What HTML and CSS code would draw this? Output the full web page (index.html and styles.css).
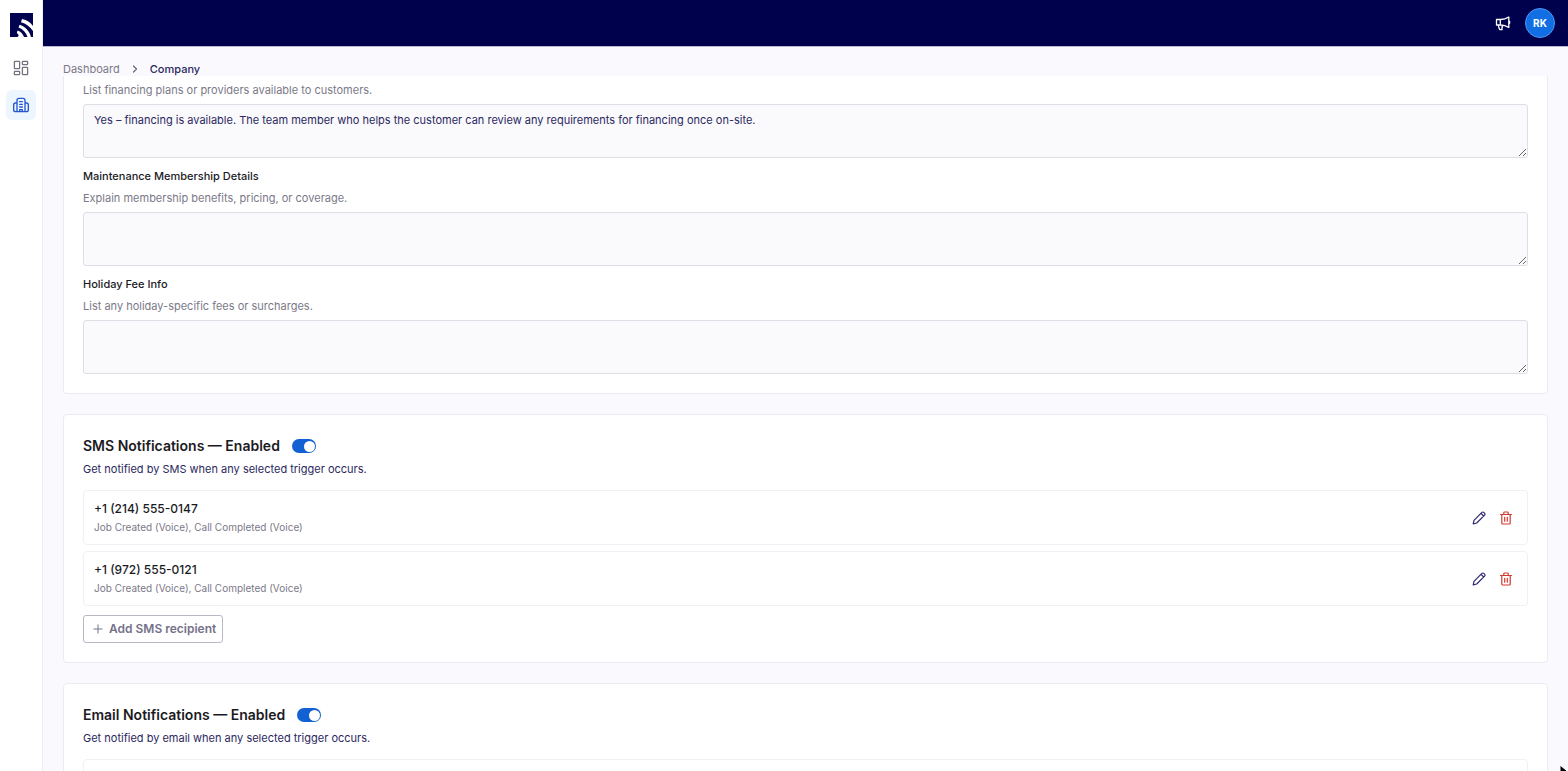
FILE: index.html
```html
<!DOCTYPE html>
<html lang="en">
<head>
<meta charset="utf-8">
<meta name="viewport" content="width=device-width, initial-scale=1">
<title>Company</title>
<link rel="stylesheet" href="styles.css">
</head>
<body>
<div class="app">
  <nav class="sidebar" aria-label="Main">
    <a class="logo" href="#" aria-label="Home">
      <svg width="23" height="24" viewBox="0 0 23 24" aria-hidden="true">
        <path fill="#03044f" d="M0 0h23v24H0z"/>
        <path fill="#fff" d="M12 6C17 7 20.500 9.500 23 13v5C20 13.500 16 10.500 11 9.200zM9.600 11.800C15 13.500 19.500 18 21 24h-3.500C16 19.500 13 16 8.500 14.500zM7.600 17.500c3.200 1.200 5.400 3.500 6.400 6.500H7.500c1-.6 1.300-1.600.8-2.600L6.800 20z"/>
      </svg>
    </a>
    <a class="nav-item" href="#" aria-label="Dashboard">
      <svg width="16" height="16" viewBox="0 0 16 16" fill="none" stroke="currentColor" stroke-width="1.3" aria-hidden="true">
        <rect x="1.400" y="1.400" width="5.200" height="7.200" rx=".6"/><rect x="9.400" y="1.400" width="5.200" height="3.200" rx=".6"/><rect x="1.400" y="11.400" width="5.200" height="3.200" rx=".6"/><rect x="9.400" y="7.400" width="5.200" height="7.200" rx=".6"/>
      </svg>
    </a>
    <a class="nav-item nav-item-active" href="#" aria-label="Company" aria-current="page">
      <svg width="16" height="16" viewBox="0 0 24 24" fill="none" stroke="currentColor" stroke-width="2" stroke-linecap="round" stroke-linejoin="round" aria-hidden="true">
        <path d="M6 22V5a3 3 0 0 1 3-3h6a3 3 0 0 1 3 3v17zM6 9H4a3 3 0 0 0-3 3v7a3 3 0 0 0 3 3h2M18 9h2a3 3 0 0 1 3 3v7a3 3 0 0 1-3 3h-2M10 7h4M10 11h4M10 15h4M10 22v-3h4v3"/>
      </svg>
    </a>
  </nav>
  <div class="page">
    <header class="topbar">
      <button class="icon-button announce" type="button" aria-label="Announcements">
        <svg width="16" height="16" viewBox="0 0 16 16" fill="none" stroke="currentColor" stroke-width="1.3" stroke-linejoin="round" stroke-linecap="round" aria-hidden="true">
          <path d="M1.500 4.500h4.200C9 4.500 11.500 3.500 13.800 2v10.500C11.500 11 9 10 5.700 10H1.500zM5.300 4.500V10M3.300 10c.2 1.700.7 3.200 1.500 4.600h2.400C6.600 13.700 6.700 12.700 7.500 12L6.400 10.200M14.600 6.300v2"/>
        </svg>
      </button>
      <button class="avatar" type="button">RK</button>
    </header>
    <nav class="breadcrumb" aria-label="Breadcrumb">
      <a class="crumb" href="#">Dashboard</a>
      <svg width="10" height="10" viewBox="0 0 10 10" fill="none" stroke="currentColor" stroke-width="1.2" stroke-linecap="round" stroke-linejoin="round" aria-hidden="true"><path d="M3.500 2l3 3-3 3"/></svg>
      <a class="crumb crumb-current" href="#" aria-current="page">Company</a>
    </nav>
    <main class="content">
      <section class="card card-continued">
        <div class="field">
          <p class="help" id="financing-help">List financing plans or providers available to customers.</p>
          <textarea class="textbox" aria-labelledby="financing-help">Yes – financing is available. The team member who helps the customer can review any requirements for financing once on-site.</textarea>
        </div>
        <div class="field">
          <label class="label" for="membership">Maintenance Membership Details</label>
          <p class="help" id="membership-help">Explain membership benefits, pricing, or coverage.</p>
          <textarea class="textbox" id="membership" aria-describedby="membership-help"></textarea>
        </div>
        <div class="field">
          <label class="label" for="holiday">Holiday Fee Info</label>
          <p class="help" id="holiday-help">List any holiday-specific fees or surcharges.</p>
          <textarea class="textbox" id="holiday" aria-describedby="holiday-help"></textarea>
        </div>
      </section>
      <section class="card">
        <div class="card-head">
          <label class="title" for="sms-switch">SMS Notifications — Enabled</label>
          <input class="switch" id="sms-switch" type="checkbox" role="switch" checked>
        </div>
        <p class="subtitle">Get notified by SMS when any selected trigger occurs.</p>
        <ul class="recipients">
          <li class="recipient">
            <div class="recipient-text">
              <span class="recipient-name">+1 (214) 555-0147</span>
              <span class="recipient-meta">Job Created (Voice), Call Completed (Voice)</span>
            </div>
            <button class="icon-button" type="button" aria-label="Edit"><svg class="icon"><use href="#icon-pencil"/></svg></button>
            <button class="icon-button danger" type="button" aria-label="Delete"><svg class="icon"><use href="#icon-trash"/></svg></button>
          </li>
          <li class="recipient">
            <div class="recipient-text">
              <span class="recipient-name">+1 (972) 555-0121</span>
              <span class="recipient-meta">Job Created (Voice), Call Completed (Voice)</span>
            </div>
            <button class="icon-button" type="button" aria-label="Edit"><svg class="icon"><use href="#icon-pencil"/></svg></button>
            <button class="icon-button danger" type="button" aria-label="Delete"><svg class="icon"><use href="#icon-trash"/></svg></button>
          </li>
        </ul>
        <button class="add-button" type="button">
          <svg width="10" height="10" viewBox="0 0 10 10" fill="none" stroke="currentColor" aria-hidden="true"><path d="M5 .5v9M.5 5h9"/></svg>
          Add SMS recipient
        </button>
      </section>
      <section class="card">
        <div class="card-head">
          <label class="title" for="email-switch">Email Notifications — Enabled</label>
          <input class="switch" id="email-switch" type="checkbox" role="switch" checked>
        </div>
        <p class="subtitle">Get notified by email when any selected trigger occurs.</p>
        <ul class="recipients">
          <li class="recipient"></li>
        </ul>
      </section>
    </main>
  </div>
  <svg class="cursor" width="14" height="20" viewBox="0 0 14 20" aria-hidden="true"><path d="M1 1v15l4-4 3 7 3-1-3-7h5z" stroke="#fff"/></svg>
</div>
<svg class="sprite" aria-hidden="true">
  <symbol id="icon-pencil" viewBox="0 0 14 14" fill="none" stroke="currentColor" stroke-width="1.200" stroke-linejoin="round" stroke-linecap="round">
    <path d="M1.200 12.800l.8-3.500 7.900-7.900a1.300 1.300 0 0 1 1.900 0l.8.800a1.300 1.300 0 0 1 0 1.900L4.700 12zM9 2.300L11.700 5"/>
  </symbol>
  <symbol id="icon-trash" viewBox="0 0 14 14" fill="none" stroke="currentColor" stroke-width="1.200" stroke-linejoin="round" stroke-linecap="round">
    <path d="M1.500 3.500h11M2.800 3.500v8.700a.8.800 0 0 0 .8.800h6.800a.8.800 0 0 0 .8-.8V3.500M4.800 3.500V1.800a.8.800 0 0 1 .8-.8h2.800a.8.800 0 0 1 .8.800v1.700M5.700 6.300v3.900M8.300 6.300v3.900"/>
  </symbol>
</svg>
</body>
</html>
```
FILE: styles.css
```css
* { box-sizing: border-box; }

body {
  margin: 0;
  font-family: Inter, "Liberation Sans", sans-serif;
  font-size: 11px;
  line-height: 18px;
  color: #2b2860;
  background: #fafafe;
}

p, ul { margin: 0; padding: 0; }
a { text-decoration: none; }
button { font: inherit; cursor: pointer; }
svg { display: block; flex: none; }

.app { position: relative; display: flex; height: 100vh; overflow: hidden; }

.sidebar {
  display: flex;
  flex: none;
  flex-direction: column;
  align-items: center;
  gap: 7px;
  width: 43px;
  padding-top: 13px;
  background: #fff;
  border-right: 1px solid #ececf3;
}
.logo { margin-bottom: 9px; }
.nav-item {
  display: grid;
  place-items: center;
  width: 30px;
  height: 30px;
  border-radius: 6px;
  color: #74727f;
}
.nav-item-active { color: #2457cf; background: #edf6ff; }

.page { display: flex; flex: 1; flex-direction: column; min-width: 0; }

.topbar {
  display: flex;
  flex: none;
  align-items: center;
  justify-content: flex-end;
  gap: 11px;
  height: 47px;
  padding-right: 13px;
  background: #00014d;
  border-bottom: 1px solid #b9b9cf;
}
.icon-button {
  display: grid;
  place-items: center;
  width: 22px;
  height: 22px;
  padding: 0;
  border: 0;
  background: none;
  color: #2b2870;
}
.announce { color: #fff; }
.avatar {
  width: 30px;
  height: 30px;
  padding: 0;
  border: 1px solid #4c96f5;
  border-radius: 50%;
  background: #126fe3;
  color: #fff;
  font-size: 10px;
  font-weight: 700;
}

.breadcrumb {
  display: flex;
  flex: none;
  align-items: center;
  gap: 10px;
  height: 29px;
  padding: 14px 20px 0;
  color: #66647a;
}
.crumb { color: #7b7988; }
.crumb-current { color: #2b2860; font-weight: 500; }

.content {
  display: flex;
  flex: 1;
  flex-direction: column;
  gap: 20px;
  min-height: 0;
  padding: 0 20px;
  overflow: hidden;
}
.card {
  flex: none;
  padding: 19px;
  background: #fff;
  border: 1px solid #ebebf3;
  border-radius: 4px;
}
.card-continued {
  display: grid;
  gap: 9px;
  padding-top: 5px;
  border-top: 0;
  border-radius: 0 0 4px 4px;
}
.field { display: flex; flex-direction: column; }
.label { margin-bottom: 4px; color: #1b1b1f; font-weight: 500; }
.help { margin-bottom: 5px; color: #7b7988; }
.textbox {
  width: 100%;
  height: 54px;
  padding: 6px 10px;
  border: 1px solid #dedee6;
  border-radius: 3px;
  outline: 0;
  background: #fafafd;
  color: #2b2860;
  font: inherit;
  resize: vertical;
}

.card-head { display: flex; align-items: center; gap: 12px; height: 24px; }
.title { color: #1b1b1f; font-size: 14px; font-weight: 600; }
.switch {
  display: flex;
  align-items: center;
  width: 24px;
  height: 14px;
  margin: 0;
  padding: 0 1px;
  border-radius: 7px;
  background: #1261d2;
  appearance: none;
}
.switch::before {
  width: 11px;
  height: 11px;
  border-radius: 50%;
  background: #fff;
  content: "";
}
.switch:checked::before { margin-left: auto; }
.subtitle { margin-top: 2px; }

.recipients { display: grid; gap: 6px; margin-top: 12px; list-style: none; }
.recipient {
  display: flex;
  align-items: center;
  gap: 5px;
  min-height: 55px;
  padding: 0 10px;
  border: 1px solid #f0f0f5;
  border-radius: 4px;
}
.recipient-text { display: flex; flex: 1; flex-direction: column; }
.recipient-name { color: #1b1b1f; font-size: 12px; font-weight: 500; }
.recipient-meta { color: #7b7988; font-size: 10px; }
.icon { width: 14px; height: 14px; }
.danger { color: #d3382f; }

.add-button {
  display: flex;
  align-items: center;
  gap: 6px;
  height: 28px;
  margin-top: 9px;
  padding: 0 6px 0 9px;
  border: 1px solid #b9b8c4;
  border-radius: 3px;
  background: #fff;
  color: #74728a;
  font-size: 12px;
  font-weight: 600;
}

.cursor { position: absolute; top: 764px; left: 1559px; }
.sprite { display: none; }
```
